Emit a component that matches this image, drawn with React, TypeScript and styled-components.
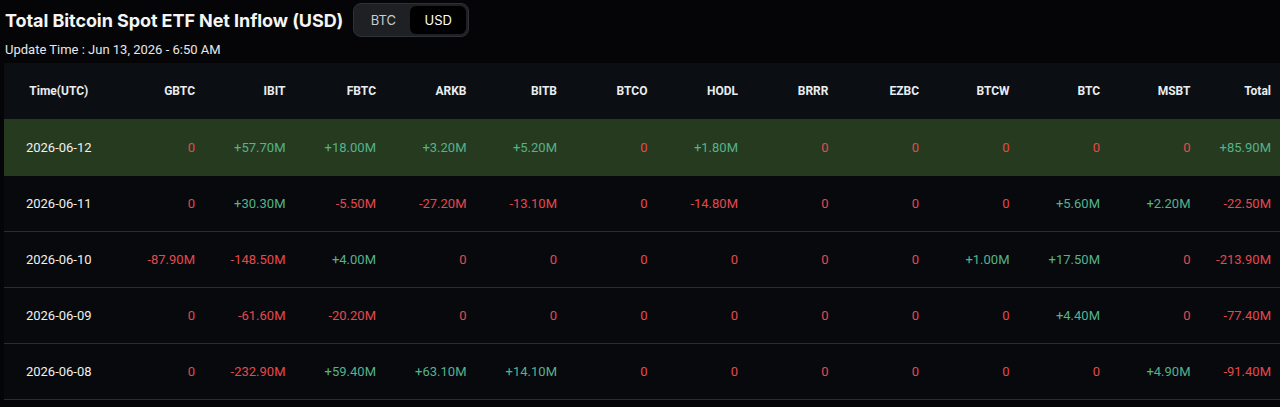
import React from "react";
import styled, { createGlobalStyle } from "styled-components";

const Global = createGlobalStyle`
  html, body { margin: 0; padding: 0; background: #050507; }
  body { font-family: Inter, "Noto Sans", sans-serif; color: #eaecef; overflow: hidden; }
`;

const Page = styled.div`
  padding: 3px 0 0 4px;
  width: 1276px;
`;

const TitleRow = styled.div`
  display: flex;
  align-items: center;
  gap: 10px;
  height: 34px;
`;

const Title = styled.h1`
  margin: 0 0 0 1px;
  font-size: 18px;
  font-weight: 700;
  letter-spacing: -0.08px;
  color: #f5f5f5;
`;

const Toggle = styled.div`
  display: flex;
  height: 34px;
  box-sizing: border-box;
  padding: 2px;
  border: 1px solid #2e3136;
  border-radius: 8px;
  background: #1e2024;
`;

const ToggleBtn = styled.button<{ $active?: boolean }>`
  border: 0;
  margin: 0;
  height: 28px;
  width: ${(p) => (p.$active ? 56 : 54)}px;
  border-radius: 6px;
  background: ${(p) => (p.$active ? "#000000" : "transparent")};
  color: ${(p) => (p.$active ? "#ffffff" : "#c7cad0")};
  font-family: Inter, sans-serif;
  font-size: 13px;
  padding: 0;
`;

const Updated = styled.div`
  margin: 5px 0 0 1px;
  font-family: Roboto, "Liberation Sans", sans-serif;
  font-size: 13px;
  color: #e6e8ea;
  height: 21px;
`;

const Table = styled.div`
  display: grid;
  grid-template-columns: 109.5px repeat(12, 90.5px) 1fr;
  background: #08090c;
`;

const HeadCell = styled.div<{ $first?: boolean }>`
  height: 56px;
  display: flex;
  align-items: center;
  justify-content: ${(p) => (p.$first ? "center" : "flex-end")};
  padding-right: ${(p) => (p.$first ? 0 : 9)}px;
  background: #0b0e12;
  font-family: Roboto, "Liberation Sans", sans-serif;
  font-size: 12px;
  font-weight: 700;
  color: #eaecef;
`;

const Cell = styled.div<{ $first?: boolean; $hl?: boolean; $tone?: "pos" | "neg" }>`
  height: ${(p) => (p.$hl ? 57 : 56)}px;
  box-sizing: border-box;
  display: flex;
  align-items: center;
  justify-content: ${(p) => (p.$first ? "center" : "flex-end")};
  padding-right: ${(p) => (p.$first ? 0 : 9)}px;
  background: ${(p) => (p.$hl ? "#253a1e" : "transparent")};
  border-bottom: 1px solid ${(p) => (p.$hl ? "#253a1e" : "#2a2d33")};
  font-family: Roboto, "Liberation Sans", sans-serif;
  font-size: 13px;
  color: ${(p) =>
    p.$tone === "pos" ? "#55b28c" : p.$tone === "neg" ? "#e5484e" : "#eef0f2"};
`;

const cols = ["GBTC", "IBIT", "FBTC", "ARKB", "BITB", "BTCO", "HODL", "BRRR", "EZBC", "BTCW", "BTC", "MSBT", "Total"];

const rows: { date: string; v: string[]; hl?: boolean }[] = [
  { date: "2026-06-12", hl: true, v: ["0", "+57.70M", "+18.00M", "+3.20M", "+5.20M", "0", "+1.80M", "0", "0", "0", "0", "0", "+85.90M"] },
  { date: "2026-06-11", v: ["0", "+30.30M", "-5.50M", "-27.20M", "-13.10M", "0", "-14.80M", "0", "0", "0", "+5.60M", "+2.20M", "-22.50M"] },
  { date: "2026-06-10", v: ["-87.90M", "-148.50M", "+4.00M", "0", "0", "0", "0", "0", "0", "+1.00M", "+17.50M", "0", "-213.90M"] },
  { date: "2026-06-09", v: ["0", "-61.60M", "-20.20M", "0", "0", "0", "0", "0", "0", "0", "+4.40M", "0", "-77.40M"] },
  { date: "2026-06-08", v: ["0", "-232.90M", "+59.40M", "+63.10M", "+14.10M", "0", "0", "0", "0", "0", "0", "+4.90M", "-91.40M"] },
];

export default function App() {
  return (
    <>
      <Global />
      <Page>
        <TitleRow>
          <Title>Total Bitcoin Spot ETF Net Inflow (USD)</Title>
          <Toggle>
            <ToggleBtn>BTC</ToggleBtn>
            <ToggleBtn $active>USD</ToggleBtn>
          </Toggle>
        </TitleRow>
        <Updated>Update Time : Jun 13, 2026 - 6:50 AM</Updated>
        <Table>
          <HeadCell $first>Time(UTC)</HeadCell>
          {cols.map((c) => (
            <HeadCell key={c}>{c}</HeadCell>
          ))}
          {rows.map((r) => (
            <React.Fragment key={r.date}>
              <Cell $first $hl={r.hl}>{r.date}</Cell>
              {r.v.map((x, i) => (
                <Cell key={i} $hl={r.hl} $tone={x.startsWith("+") ? "pos" : "neg"}>
                  {x}
                </Cell>
              ))}
            </React.Fragment>
          ))}
        </Table>
      </Page>
    </>
  );
}
